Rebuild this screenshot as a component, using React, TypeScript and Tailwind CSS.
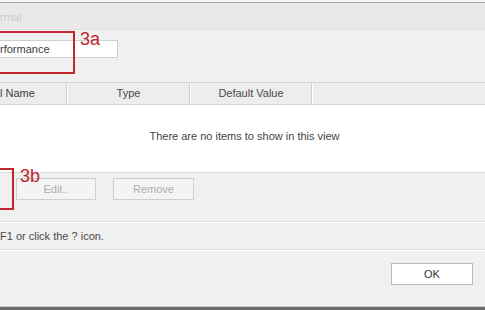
import React from "react";

export default function App() {
  const font = { fontFamily: '"Liberation Sans", Arial, sans-serif' };
  return (
    <div
      className="relative w-[485px] h-[310px] overflow-hidden bg-[#f0f0f0] text-[11px] text-[#4a4a4a] flex flex-col"
      style={font}
    >
      {/* top frame */}
      <div className="h-[2px] bg-[#f6f6f6]" />
      <div className="h-[1px] bg-[#a9a9a9]" />
      {/* title strip */}
      <div className="h-[27px] bg-[#e9e9e9] border-b border-[#e2e2e2] flex items-center pt-[2px]">
        <span className="text-[#c9c9c9]">rmal</span>
      </div>
      {/* name row */}
      <div className="h-[52px] pt-[10px]">
        <div className="w-[118px] h-[18px] bg-white border-y border-r border-[#cfcfcf] flex items-center">
          <span className="text-[#3c3c3c]">rformance</span>
        </div>
      </div>
      {/* list header */}
      <div className="h-[23px] border-y border-[#d4d4d4] bg-[#ededed] flex items-center">
        <div className="w-[67px] h-full flex items-center border-r border-[#d0d0d0] text-[#3c3c3c]">
          l Name
        </div>
        <div className="w-[123px] h-full flex items-center justify-center border-r border-[#d0d0d0] border-l border-l-white">
          Type
        </div>
        <div className="w-[122px] h-full flex items-center justify-center border-r border-[#d0d0d0] border-l border-l-white">
          Default Value
        </div>
        <div className="flex-1 h-full border-l border-l-white" />
      </div>
      {/* list body */}
      <div className="h-[68px] bg-white border-b border-[#dadada] flex justify-center pt-[23px]">
        <span className="pl-[4px] text-[#444]">There are no items to show in this view</span>
      </div>
      {/* buttons */}
      <div className="h-[48px] flex items-start pt-[5px] pl-[16px] gap-[17px]">
        <div className="w-[80px] h-[22px] border border-[#cfcfcf] bg-[#f4f4f4] flex items-center justify-center text-[#adadad]">
          Edit..
        </div>
        <div className="w-[81px] h-[22px] border border-[#cfcfcf] bg-[#f4f4f4] flex items-center justify-center text-[#adadad]">
          Remove
        </div>
      </div>
      {/* help text */}
      <div className="h-[1px] bg-[#dcdcdc]" />
      <div className="h-[1px] bg-white" />
      <div className="h-[26px] flex items-center">
        <span>F1 or click the ? icon.</span>
      </div>
      <div className="h-[1px] bg-[#dcdcdc]" />
      <div className="h-[1px] bg-white" />
      {/* OK row */}
      <div className="flex-1 flex justify-end items-start pt-[12px] pr-[12px]">
        <div className="w-[82px] h-[22px] border border-[#b9b9b9] bg-white flex items-center justify-center text-[#333]">
          OK
        </div>
      </div>
      <div className="h-[1px] bg-[#c8c8c8]" />
      <div className="h-[3px] bg-[#6b6b6b]" />

      {/* annotation 3a */}
      <div className="absolute left-[-4px] top-[31px] w-[79px] h-[43px] border-2 border-[#c1272d]" />
      <div className="absolute left-[80px] top-[30px] text-[18px] leading-none text-[#c1272d]">
        3a
      </div>
      {/* annotation 3b */}
      <div className="absolute left-[-4px] top-[168px] w-[18px] h-[42px] border-2 border-[#c1272d]" />
      <div className="absolute left-[20px] top-[167px] text-[18px] leading-none text-[#c1272d]">
        3b
      </div>
    </div>
  );
}
